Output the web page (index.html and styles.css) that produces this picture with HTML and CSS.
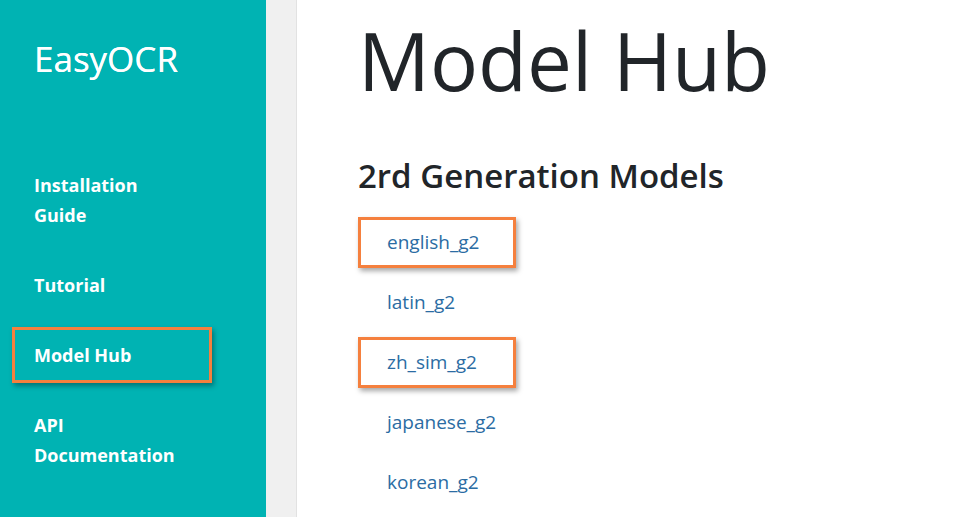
FILE: index.html
```html
<!DOCTYPE html>
<html lang="en">
<head>
  <meta charset="UTF-8">
  <meta name="viewport" content="width=device-width, initial-scale=1.0">
  <title>Model Hub - EasyOCR</title>
  <link rel="stylesheet" href="styles.css">
</head>
<body>
  <aside class="sidebar">
    <div class="brand">EasyOCR</div>
    <nav class="nav">
      <a href="#">Installation<br>Guide</a>
      <a href="#">Tutorial</a>
      <a href="#" class="marked">Model Hub</a>
      <a href="#">API<br>Documentation</a>
    </nav>
  </aside>
  <div class="gutter"></div>

  <main class="content">
    <h1>Model Hub</h1>
    <h2>2rd Generation Models</h2>
    <ul class="models">
      <li><a href="#" class="marked">english_g2</a></li>
      <li><a href="#">latin_g2</a></li>
      <li><a href="#" class="marked">zh_sim_g2</a></li>
      <li><a href="#">japanese_g2</a></li>
      <li><a href="#">korean_g2</a></li>
    </ul>
  </main>
</body>
</html>
```
FILE: styles.css
```css
body {
  margin: 0;
  height: 100vh;
  overflow: hidden;
  display: flex;
  font-family: "Open Sans", "Noto Sans", sans-serif;
  background: white;
  color: #212529;
}
.sidebar {
  width: 266px;
  flex-shrink: 0;
  background: #00b3b3;
  padding: 33px 0 0 12px;
  box-sizing: border-box;
}
.brand {
  color: white;
  font-size: 35px;
  line-height: 51px;
  padding-left: 22px;
  margin-bottom: 73px;
  text-shadow: 0 0 0.6px white;
}
.nav a {
  display: block;
  width: 200px;
  box-sizing: border-box;
  padding: 10px 19px;
  border: 3px solid transparent;
  margin-bottom: 14px;
  color: white;
  font-weight: bold;
  font-size: 18px;
  line-height: 30px;
  text-decoration: none;
}
.marked {
  border-color: #f5803e !important;
  box-shadow: 2px 3px 5px rgba(0,0,0,0.35);
}
.gutter {
  width: 30px;
  flex-shrink: 0;
  background: #f0f0f0;
  border-right: 1px solid #e2e2e2;
}
.content {
  padding-left: 61px;
}
h1 {
  margin: 12px 0 0;
  font-size: 80px;
  font-weight: normal;
  line-height: 96px;
}
h2 {
  margin: 48px 0 0;
  font-size: 33px;
  font-weight: 600;
  line-height: 40px;
}
.models {
  list-style: none;
  margin: 16px 0 0;
  padding: 0;
}
.models li {
  height: 60px;
  display: flex;
  align-items: center;
}
.models a {
  display: inline-block;
  width: 158px;
  box-sizing: border-box;
  padding: 10px 26px;
  border: 3px solid transparent;
  color: #2b6ca3;
  font-size: 19px;
  line-height: 25px;
  text-decoration: none;
}
```
